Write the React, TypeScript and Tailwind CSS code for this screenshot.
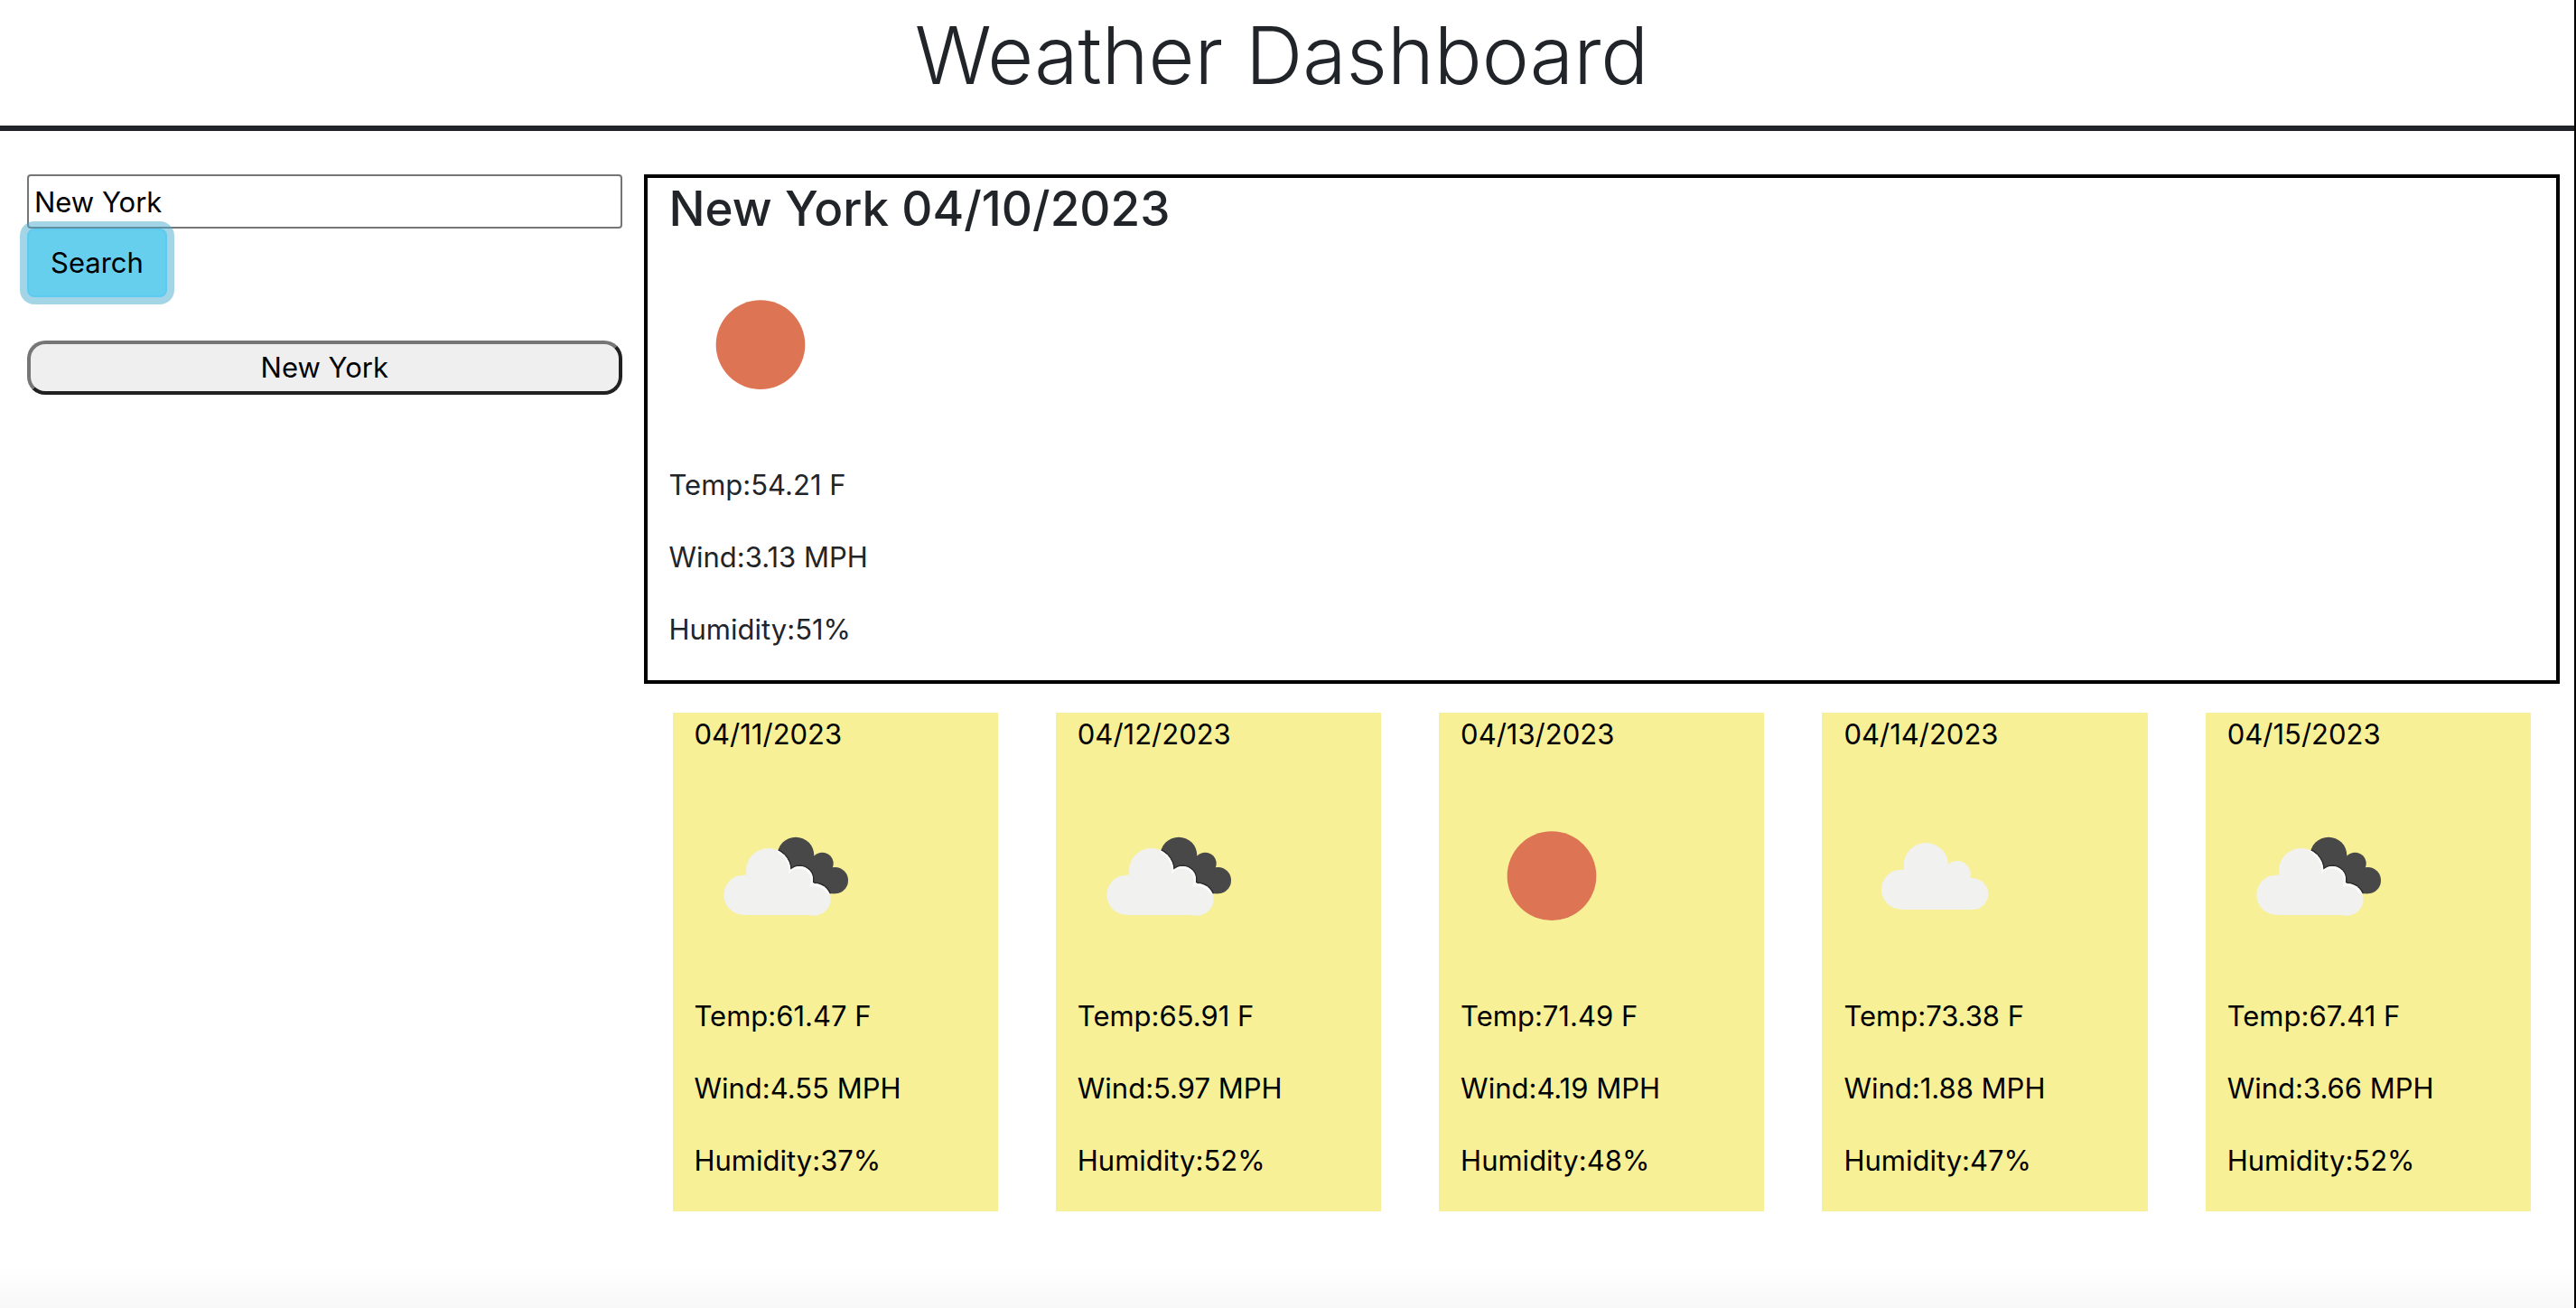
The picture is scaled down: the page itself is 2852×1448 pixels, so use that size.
import { useState } from "react";

type Sky = "clear" | "broken" | "scattered";

interface Reading {
  date: string;
  sky: Sky;
  temp: string;
  wind: string;
  humidity: string;
}

const today: Reading = { date: "04/10/2023", sky: "clear", temp: "54.21", wind: "3.13", humidity: "51" };

const forecast: Reading[] = [
  { date: "04/11/2023", sky: "broken", temp: "61.47", wind: "4.55", humidity: "37" },
  { date: "04/12/2023", sky: "broken", temp: "65.91", wind: "5.97", humidity: "52" },
  { date: "04/13/2023", sky: "clear", temp: "71.49", wind: "4.19", humidity: "48" },
  { date: "04/14/2023", sky: "scattered", temp: "73.38", wind: "1.88", humidity: "47" },
  { date: "04/15/2023", sky: "broken", temp: "67.41", wind: "3.66", humidity: "52" },
];

function CloudShape() {
  return (
    <>
      <circle cx="280" cy="659" r="66" />
      <circle cx="362" cy="578" r="74" />
      <circle cx="466" cy="608" r="44" />
      <circle cx="517" cy="674" r="52" />
      <path d="M280 593H300L362 560L430 570L466 600L517 622V726H280Z" />
    </>
  );
}

function DarkCloudShape() {
  return (
    <>
      <circle cx="453" cy="528" r="61" />
      <circle cx="541" cy="555" r="37" />
      <circle cx="583" cy="611" r="44" />
      <path d="M400 520L505 525L541 550L583 600V655H540L400 600Z" />
    </>
  );
}

function SkyIcon({ sky }: { sky: Sky }) {
  return (
    <svg viewBox="117 294 600 600" className="size-50" role="img" aria-label={sky}>
      {sky === "clear" && <circle cx="420" cy="596" r="148" fill="#dd7555" />}
      {sky === "scattered" && (
        <g fill="#f1f1ef" transform="translate(29 -18)">
          <CloudShape />
        </g>
      )}
      {sky === "broken" && (
        <>
          <defs>
            <clipPath id="dark-cloud">
              <DarkCloudShape />
            </clipPath>
            <clipPath id="rim">
              <path d="M385 500H600V658H560L500 640L420 590Z" />
            </clipPath>
          </defs>
          <g fill="#484849">
            <DarkCloudShape />
          </g>
          <g clipPath="url(#dark-cloud)" fill="#2c2c2d" stroke="#2c2c2d" strokeWidth="9">
            <CloudShape />
          </g>
          <g fill="#f1f1ef">
            <CloudShape />
          </g>
          <g clipPath="url(#rim)" fill="#fbfbfb">
            <CloudShape />
          </g>
          <g fill="#f1f1ef">
            <circle cx="361" cy="579" r="69" />
            <circle cx="463" cy="612" r="40" />
            <circle cx="513" cy="679" r="49" />
            <path d="M362 560L425 592L470 610L510 640V700H362Z" />
          </g>
        </>
      )}
    </svg>
  );
}

function Details({ reading }: { reading: Reading }) {
  return (
    <div className="mb-8 flex flex-col gap-8">
      <SkyIcon sky={reading.sky} />
      <p>Temp:{reading.temp} F</p>
      <p>Wind:{reading.wind} MPH</p>
      <p>Humidity:{reading.humidity}%</p>
    </div>
  );
}

export default function App() {
  const [city, setCity] = useState("New York");

  return (
    <div className="flex min-h-screen flex-col border-r-2 border-black bg-white font-['Inter',sans-serif] text-[31px] leading-[48px] text-[#212529]">
      <header className="border-b-6 border-[#212529] pt-1 pb-5">
        <h1 className="pr-3 text-center text-[88px] leading-[115px] font-light">Weather Dashboard</h1>
      </header>

      <div className="flex grow pt-12">
        <aside className="w-1/4 shrink-0 pr-6 pl-[30px] text-black">
          <form className="flex flex-col items-start" onSubmit={(e) => e.preventDefault()}>
            <input
              type="text"
              aria-label="City"
              value={city}
              onChange={(e) => setCity(e.target.value)}
              className="h-15 w-full rounded-[4px] border-2 border-[#767676] bg-white px-1.5 outline-none"
            />
            <button
              type="submit"
              className="rounded-[8px] border-2 border-[#5ccbef] bg-[#67cfee] px-6 py-3 ring-8 ring-[#4aacce]/50"
            >
              Search
            </button>
          </form>
          <button
            type="button"
            onClick={() => setCity("New York")}
            className="mt-12 h-15 w-full rounded-[20px] border-4 border-t-[#767676] border-r-[#212121] border-b-[#212121] border-l-[#767676] bg-[#efefef] leading-[52px]"
          >
            New York
          </button>
        </aside>

        <main className="min-w-0 grow pr-4">
          <section className="border-4 border-black px-6">
            <h2 className="mb-4 text-[53px] leading-[68px] font-medium">New York {today.date}</h2>
            <Details reading={today} />
          </section>

          <section aria-label="Five day forecast" className="mt-8 grid grid-cols-5 gap-16 px-8 text-black">
            {forecast.map((day) => (
              <article key={day.date} className="flow-root bg-[#f8f096] px-6">
                <h3 className="mb-8">{day.date}</h3>
                <Details reading={day} />
              </article>
            ))}
          </section>
        </main>
      </div>
      <div className="h-12 bg-linear-to-b from-white to-[#f8f8f8]" />
    </div>
  );
}
